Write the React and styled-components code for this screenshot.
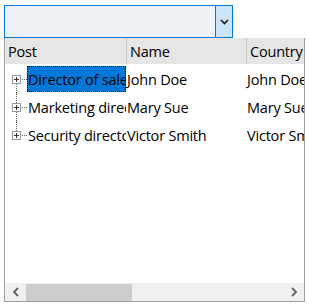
import React from "react";
import styled, { createGlobalStyle } from "styled-components";

const Global = createGlobalStyle`
  html, body { margin: 0; padding: 0; background: #ffffff; }
  body { font-family: "Open Sans", "Noto Sans", sans-serif; }
`;

const rows = [
  { post: "Director of sales", name: "John Doe", country: "John Doe" },
  { post: "Marketing director", name: "Mary Sue", country: "Mary Sue" },
  { post: "Security director", name: "Victor Smith", country: "Victor Smith" },
];

export default function App() {
  return (
    <>
      <Global />
      <Page>
        <Combo>
          <ComboField />
          <ComboButton>
            <svg width="9" height="6" viewBox="0 0 9 6">
              <path d="M1 1 L4.5 4.5 L8 1" fill="none" stroke="#1a1a1a" strokeWidth="1.6" />
            </svg>
          </ComboButton>
        </Combo>
        <Grid>
          <Header>
            <HeadCell $w={122}>Post</HeadCell>
            <HeadCell $w={120}>Name</HeadCell>
            <HeadCell $w={100}>Country</HeadCell>
          </Header>
          <Body>
            {rows.map((r, i) => (
              <Row key={r.post}>
                <Expander>
                  <VLine $top={i > 0} $bottom={i < rows.length - 1} />
                  <HLine />
                  <PlusBox>
                    <svg width="9" height="9" viewBox="0 0 9 9">
                      <rect x="0.5" y="0.5" width="8" height="8" fill="#fff" stroke="#9a9a9a" />
                      <path d="M2 4.5 H7 M4.5 2 V7" stroke="#333" strokeWidth="1" />
                    </svg>
                  </PlusBox>
                </Expander>
                <PostCell $selected={i === 0}>{r.post}</PostCell>
                <Cell $w={120}>{r.name}</Cell>
                <Cell $w={100}>{r.country}</Cell>
              </Row>
            ))}
          </Body>
          <HScroll>
            <Arrow>
              <svg width="8" height="10" viewBox="0 0 8 10">
                <path d="M6 1 L2 5 L6 9" fill="none" stroke="#606060" strokeWidth="1.8" />
              </svg>
            </Arrow>
            <Track>
              <Thumb />
            </Track>
            <Arrow>
              <svg width="8" height="10" viewBox="0 0 8 10">
                <path d="M2 1 L6 5 L2 9" fill="none" stroke="#606060" strokeWidth="1.8" />
              </svg>
            </Arrow>
          </HScroll>
        </Grid>
      </Page>
    </>
  );
}

const Page = styled.div`
  width: 309px;
  height: 307px;
  padding: 5px 4px 5px 4px;
  box-sizing: border-box;
  display: flex;
  flex-direction: column;
`;

const Combo = styled.div`
  width: 229px;
  height: 33px;
  box-sizing: border-box;
  border: 1px solid #0078d7;
  background: #eef2f6;
  display: flex;
`;

const ComboField = styled.div`
  flex: 1;
`;

const ComboButton = styled.div`
  width: 16px;
  border-left: 1px solid #0078d7;
  background: #cce4f7;
  display: flex;
  align-items: center;
  justify-content: center;
`;

const Grid = styled.div`
  flex: 1;
  border: 1px solid #a0a0a0;
  border-top: none;
  display: flex;
  flex-direction: column;
  overflow: hidden;
  font-size: 14.5px;
  letter-spacing: -0.2px;
  color: #000;
`;

const Header = styled.div`
  display: flex;
  height: 26px;
  background: #e5e5e5;
  flex-shrink: 0;
`;

const HeadCell = styled.div`
  width: ${(p) => p.$w}px;
  flex-shrink: 0;
  box-sizing: border-box;
  padding-left: 3px;
  border-right: 1px solid #c8c8c8;
  display: flex;
  align-items: center;
`;

const Body = styled.div`
  flex: 1;
  padding-top: 1px;
`;

const Row = styled.div`
  display: flex;
  height: 28px;
  align-items: center;
`;

const Expander = styled.div`
  position: relative;
  width: 22px;
  height: 100%;
  flex-shrink: 0;
`;

const VLine = styled.div`
  position: absolute;
  left: 11px;
  top: ${(p) => (p.$top ? "0" : "14px")};
  bottom: ${(p) => (p.$bottom ? "0" : "14px")};
  border-left: 1px dotted #6a6a6a;
`;

const HLine = styled.div`
  position: absolute;
  left: 13px;
  width: 9px;
  top: 14px;
  border-top: 1px dotted #6a6a6a;
`;

const PlusBox = styled.div`
  position: absolute;
  left: 7px;
  top: 10px;
  width: 9px;
  height: 9px;
  line-height: 0;
`;

const Cell = styled.div`
  width: ${(p) => p.$w}px;
  flex-shrink: 0;
  overflow: hidden;
  white-space: nowrap;
  padding-left: 1px;
  box-sizing: border-box;
`;

const PostCell = styled.div`
  width: 99px;
  height: 26px;
  flex-shrink: 0;
  overflow: hidden;
  white-space: nowrap;
  box-sizing: border-box;
  padding-left: 1px;
  display: flex;
  align-items: center;
  background: ${(p) => (p.$selected ? "#0078d7" : "transparent")};
  outline: ${(p) => (p.$selected ? "1px dotted #000" : "none")};
  outline-offset: -1px;
`;

const HScroll = styled.div`
  display: flex;
  height: 18px;
  background: #f0f0f0;
  flex-shrink: 0;
`;

const Arrow = styled.div`
  width: 21px;
  display: flex;
  align-items: center;
  justify-content: center;
`;

const Track = styled.div`
  flex: 1;
  display: flex;
  align-items: center;
`;

const Thumb = styled.div`
  width: 106px;
  height: 17px;
  background: #cdcdcd;
`;
